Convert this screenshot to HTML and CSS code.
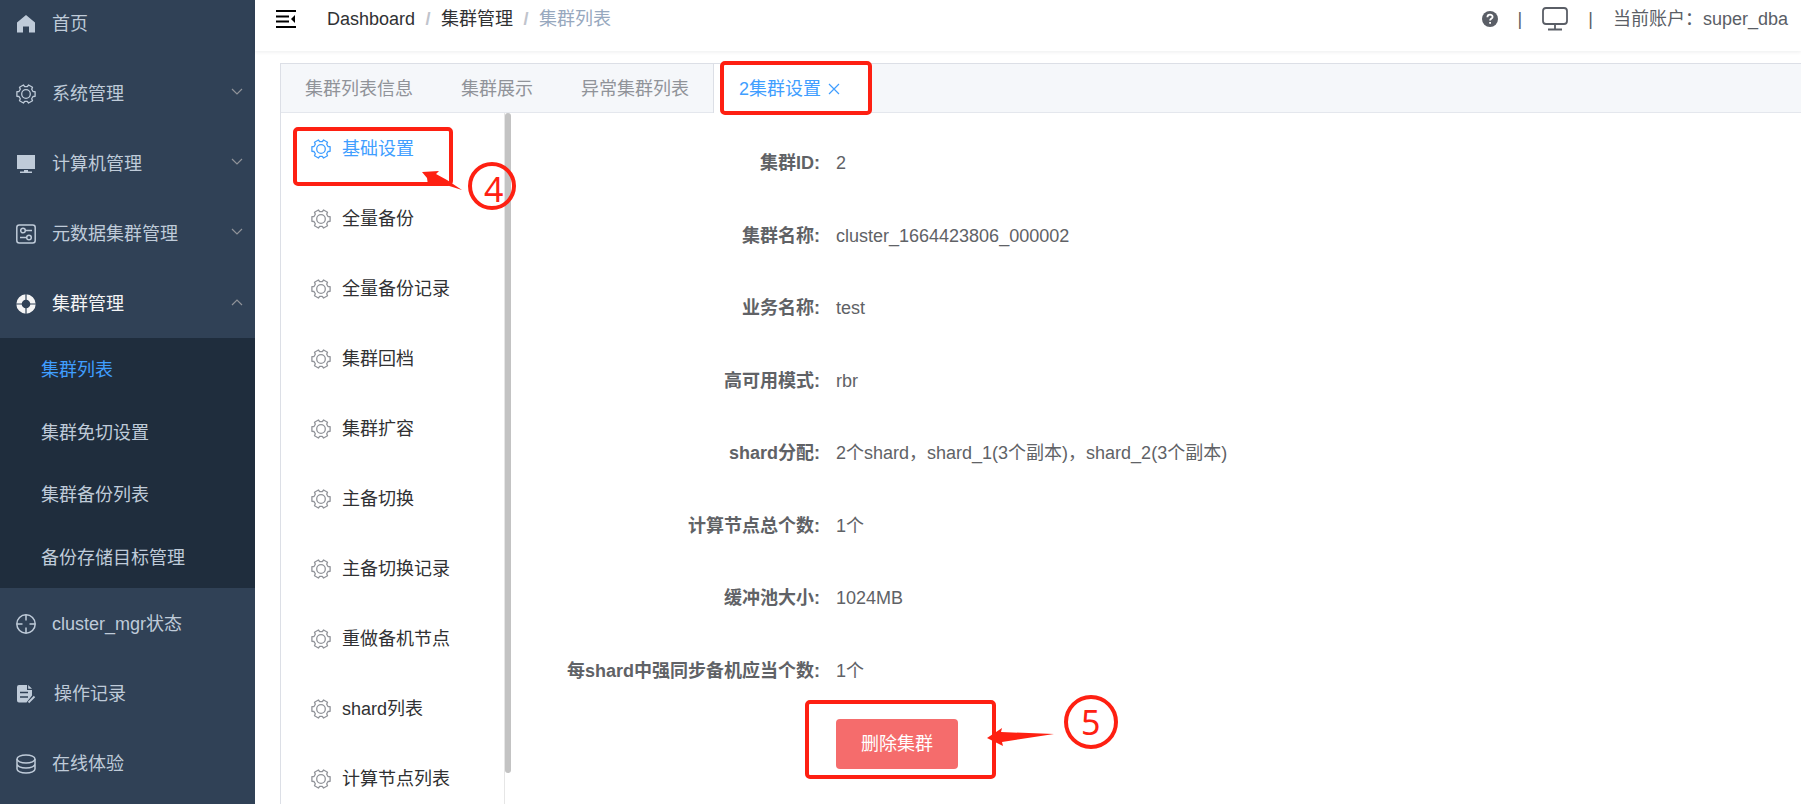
FILE: index.html
```html
<!DOCTYPE html>
<html lang="zh-CN">
<head>
    <meta charset="UTF-8">
    <meta name="viewport" content="width=device-width, initial-scale=1.0">
    <title>集群设置</title>
    <link rel="stylesheet" href="styles.css">
</head>
<body>
    <!-- 公共图标 -->
    <svg class="sprite" aria-hidden="true">
        <symbol id="i-gear" viewBox="0 0 20 20">
            <g fill="none" stroke="currentColor" stroke-linejoin="round">
                <path stroke-width="1.3" d="M19.1 7.7V12.3L17 12.5L15.7 14.8L16.5 16.8L12.6 19L11.3 17.3H8.7L7.4 19L3.5 16.8L4.3 14.8L3 12.5L.9 12.3V7.7L3 7.5L4.3 5.2L3.5 3.2L7.4 1L8.7 2.7H11.3L12.6 1L16.5 3.2L15.7 5.2L17 7.5Z"/>
                <circle stroke-width="1.3" cx="10" cy="10" r="4.3"/>
            </g>
        </symbol>
        <symbol id="i-down" viewBox="0 0 12 8">
            <path fill="none" stroke="currentColor" stroke-width="1.2" d="M1 1l5 5 5-5"/>
        </symbol>
    </svg>

    <div class="app">
        <nav class="sidebar">
            <ul class="menu">
                <li><a href="#" class="menu-item">
                    <svg class="icon" viewBox="0 0 20 20"><path fill="currentColor" d="M10 1L19 8.4V18.5H13V12.5H7V18.5H1V8.4Z"/></svg>
                    <span>首页</span>
                </a></li>
                <li><a href="#" class="menu-item">
                    <svg class="icon"><use href="#i-gear"/></svg>
                    <span>系统管理</span>
                    <svg class="arrow"><use href="#i-down"/></svg>
                </a></li>
                <li><a href="#" class="menu-item">
                    <svg class="icon" viewBox="0 0 20 20"><path fill="currentColor" d="M1 1h18v14H1zM8 16h4v1.5h4V19H4v-1.5h4z"/></svg>
                    <span>计算机管理</span>
                    <svg class="arrow"><use href="#i-down"/></svg>
                </a></li>
                <li><a href="#" class="menu-item">
                    <svg class="icon" viewBox="0 0 20 20">
                        <g fill="none" stroke="currentColor" stroke-width="1.5">
                            <rect x="0.8" y="0.9" width="18.4" height="18" rx="2.5"/>
                            <circle cx="7" cy="6.500" r="2.3"/>
                            <circle cx="13" cy="13.500" r="2.3"/>
                            <path d="M9 6.500h7M4 13.500h7"/>
                        </g>
                    </svg>
                    <span>元数据集群管理</span>
                    <svg class="arrow"><use href="#i-down"/></svg>
                </a></li>
                <li>
                    <a href="#" class="menu-item opened">
                        <svg class="icon" viewBox="0 0 20 20">
                            <circle cx="10" cy="10" r="7" fill="none" stroke="currentColor" stroke-width="5.4"/>
                            <path stroke="#304156" stroke-width="1.2" d="M10 0v6M10 14v6M0 10h6M14 10h6"/>
                        </svg>
                        <span>集群管理</span>
                        <svg class="arrow up"><use href="#i-down"/></svg>
                    </a>
                    <ul class="submenu">
                        <li><a href="#" class="active">集群列表</a></li>
                        <li><a href="#">集群免切设置</a></li>
                        <li><a href="#">集群备份列表</a></li>
                        <li><a href="#">备份存储目标管理</a></li>
                    </ul>
                </li>
                <li><a href="#" class="menu-item">
                    <svg class="icon" viewBox="0 0 20 20">
                        <g fill="none" stroke="currentColor" stroke-width="1.5">
                            <circle cx="10" cy="10" r="9.2"/>
                            <path d="M10 1v5.500M10 13.500V19M1 10h5.500M13.500 10H19"/>
                        </g>
                    </svg>
                    <span>cluster_mgr状态</span>
                </a></li>
                <li><a href="#" class="menu-item wide">
                    <svg class="icon" viewBox="0 0 20 20">
                        <path fill="currentColor" d="M3 1h8v5h5v5.500L10.500 18.500H3q-2 0-2-2V3q0-2 2-2z"/>
                        <path fill="currentColor" d="M12.200 1l3.800 3.800h-3.800z"/>
                        <path stroke="#304156" stroke-width="1.5" d="M4 8.500h8M4 13h8"/>
                        <path stroke="currentColor" stroke-width="1.8" d="M12.500 18.500l6-6"/>
                    </svg>
                    <span>操作记录</span>
                </a></li>
                <li><a href="#" class="menu-item">
                    <svg class="icon" viewBox="0 0 20 20">
                        <g fill="none" stroke="currentColor" stroke-width="1.5">
                            <ellipse cx="10" cy="5" rx="9" ry="4"/>
                            <path d="M1 5v5c0 2.200 4 4 9 4s9-1.800 9-4V5M1 10v5c0 2.200 4 4 9 4s9-1.800 9-4v-5"/>
                        </g>
                    </svg>
                    <span>在线体验</span>
                </a></li>
            </ul>
        </nav>

        <div class="page">
            <header class="topbar">
                <button class="fold" type="button" aria-label="收起菜单">
                    <svg viewBox="0 0 20 20"><path stroke="#000" stroke-width="2" d="M0 2h20M0 7.500h13M0 12.500h13M0 18h20"/><path d="M15 10l4-4v8z"/></svg>
                </button>
                <div class="breadcrumb">
                    <a href="#">Dashboard</a><i>/</i><a href="#">集群管理</a><i>/</i><span>集群列表</span>
                </div>
                <div class="user-area">
                    <svg class="help" viewBox="0 0 16 16">
                        <circle cx="8" cy="8" r="8" fill="#5a5e66"/>
                        <path fill="none" stroke="#fff" stroke-width="1.8" d="M5.400 6.200c0-3.400 5.200-3.200 5.200-.3 0 1.700-2.500 1.700-2.500 3.700M8.100 10.900v1.900"/>
                    </svg>
                    <span>|</span>
                    <svg class="screen" viewBox="0 0 26 24">
                        <path fill="none" stroke="#5a5e66" stroke-width="1.8" d="M4 1h18q3 0 3 3v10q0 3-3 3H4q-3 0-3-3V4q0-3 3-3zM13 17v5M6 22.500h14"/>
                    </svg>
                    <span>|</span>
                    <span>当前账户：super_dba</span>
                </div>
            </header>

            <main class="card">
                <div class="tabs">
                    <button type="button">集群列表信息</button>
                    <button type="button">集群展示</button>
                    <button type="button">异常集群列表</button>
                    <button type="button" class="current">2集群设置
                        <svg class="close" viewBox="0 0 12 12"><path stroke="currentColor" stroke-width="1.2" d="M1 1l10 10M11 1L1 11"/></svg>
                    </button>
                </div>
                <div class="card-body">
                    <aside class="settings">
                        <a href="#" class="active"><svg class="icon"><use href="#i-gear"/></svg>基础设置</a>
                        <a href="#"><svg class="icon"><use href="#i-gear"/></svg>全量备份</a>
                        <a href="#"><svg class="icon"><use href="#i-gear"/></svg>全量备份记录</a>
                        <a href="#"><svg class="icon"><use href="#i-gear"/></svg>集群回档</a>
                        <a href="#"><svg class="icon"><use href="#i-gear"/></svg>集群扩容</a>
                        <a href="#"><svg class="icon"><use href="#i-gear"/></svg>主备切换</a>
                        <a href="#"><svg class="icon"><use href="#i-gear"/></svg>主备切换记录</a>
                        <a href="#"><svg class="icon"><use href="#i-gear"/></svg>重做备机节点</a>
                        <a href="#"><svg class="icon"><use href="#i-gear"/></svg>shard列表</a>
                        <a href="#"><svg class="icon"><use href="#i-gear"/></svg>计算节点列表</a>
                    </aside>
                    <div class="scrollbar"></div>
                    <section class="detail">
                        <dl>
                            <dt>集群ID:</dt><dd>2</dd>
                            <dt>集群名称:</dt><dd>cluster_1664423806_000002</dd>
                            <dt>业务名称:</dt><dd>test</dd>
                            <dt>高可用模式:</dt><dd>rbr</dd>
                            <dt>shard分配:</dt><dd>2个shard，shard_1(3个副本)，shard_2(3个副本)</dd>
                            <dt>计算节点总个数:</dt><dd>1个</dd>
                            <dt>缓冲池大小:</dt><dd>1024MB</dd>
                            <dt>每shard中强同步备机应当个数:</dt><dd>1个</dd>
                        </dl>
                        <button type="button" class="btn-danger">删除集群</button>
                    </section>
                </div>
            </main>
        </div>
    </div>

    <!-- 步骤标注 -->
    <svg class="marks" viewBox="0 0 1130 804">
        <g fill="none" stroke="#fe2012" stroke-width="4">
            <rect x="722" y="63" width="148" height="50" rx="3"/>
            <rect x="295" y="129" width="156" height="55" rx="3"/>
            <rect x="807" y="702" width="187" height="75" rx="3"/>
            <circle cx="492" cy="186" r="22"/>
            <circle cx="1091" cy="722" r="25"/>
        </g>
        <g fill="#fe2012">
            <path d="M422 172L439 171L436 174L447 180L462 190L443 184L428 185L427 178Z"/>
            <path d="M987 738L1002 728L1001 732L1054 734L1002 742L1003 746Z"/>
            <text x="484" y="202">4</text>
            <text x="1081" y="735">5</text>
        </g>
    </svg>
</body>
</html>
```
FILE: styles.css
```css
* {
    box-sizing: border-box;
}
body {
    margin: 0;
    overflow: hidden;
    font-family: "Liberation Sans", "Noto Sans CJK SC", sans-serif;
    font-size: 18px;
    line-height: 24px;
    color: #606266;
    background: #fff;
}
ul, dl, dd {
    margin: 0;
    padding: 0;
    list-style: none;
}
a {
    color: inherit;
    text-decoration: none;
}
button {
    font: inherit;
    border: 0;
    cursor: pointer;
}
.sprite {
    display: none;
}
.app {
    display: flex;
    height: 100vh;
}

/* 左侧菜单 */
.sidebar {
    flex: 0 0 255px;
    overflow: hidden;
    background: #304156;
    color: #bfcbd9;
}
.menu {
    margin-top: -12px;
}
.menu-item {
    display: flex;
    align-items: center;
    gap: 16px;
    height: 70px;
    padding: 2px 12px 0 16px;
}
.menu-item.wide {
    gap: 18px;
}
.menu-item.opened {
    color: #f4f4f5;
}
.icon {
    flex: none;
    width: 20px;
    height: 20px;
}
.arrow {
    width: 12px;
    height: 8px;
    margin-left: auto;
    margin-bottom: 4px;
    color: #909399;
}
.arrow.up {
    transform: rotate(180deg);
}
.submenu {
    display: grid;
    grid-auto-rows: 1fr;
    height: 250px;
    background: #1f2d3d;
}
.submenu a {
    display: flex;
    align-items: center;
    height: 100%;
    padding: 2px 0 0 41px;
}
.submenu .active {
    color: #409eff;
}

/* 顶部 */
.page {
    flex: 1;
    min-width: 0;
    display: flex;
    flex-direction: column;
}
.topbar {
    display: flex;
    align-items: center;
    height: 51px;
    padding: 0 13px 14px 21px;
    box-shadow: 0 1px 4px rgba(0, 21, 41, 0.08);
}
.fold {
    width: 20px;
    height: 20px;
    padding: 0;
    background: none;
}
.fold svg {
    display: block;
}
.breadcrumb {
    display: flex;
    margin-left: 31px;
    color: #97a8be;
}
.breadcrumb a {
    color: #303133;
}
.breadcrumb i {
    width: 26px;
    text-align: center;
    font-style: normal;
    font-weight: bold;
    color: #c0c4cc;
}
.user-area {
    display: flex;
    align-items: center;
    gap: 20px;
    margin-left: auto;
    color: #5a5e66;
}
.help {
    width: 16px;
    height: 16px;
}
.screen {
    width: 26px;
    height: 24px;
}

/* 标签页 */
.card {
    flex: 1;
    min-height: 0;
    display: flex;
    flex-direction: column;
    margin: 12px 0 0 25px;
    border: 1px solid #dcdfe6;
    border-width: 1px 0 0 1px;
}
.tabs {
    display: flex;
    height: 49px;
    background: #f5f7fa;
    border-bottom: 1px solid #e4e7ed;
}
.tabs button {
    padding: 2px 24px 0;
    background: none;
    color: #909399;
}
.tabs .current {
    height: 49px;
    padding: 0 28px 0 25px;
    border-left: 1px solid #dcdfe6;
    background: #fff;
    color: #409eff;
}
.close {
    width: 12px;
    height: 12px;
    margin-left: 2px;
}
.card-body {
    flex: 1;
    min-height: 0;
    display: flex;
}

/* 设置菜单 */
.settings {
    flex: 0 0 224px;
    overflow: hidden;
    border-right: 1px solid #e6e6e6;
    color: #303133;
}
.settings a {
    display: flex;
    align-items: center;
    gap: 11px;
    height: 70px;
    padding: 2px 0 0 30px;
}
.settings .icon {
    color: #909399;
}
.settings .active,
.settings .active .icon {
    color: #409eff;
}
.scrollbar {
    width: 6px;
    height: 660px;
    border-radius: 3px;
    background: #c3c3c3;
}

/* 集群信息 */
.detail {
    flex: 1;
    padding-top: 14px;
}
.detail dl {
    display: grid;
    grid-template-columns: 309px 1fr;
    grid-auto-rows: 1fr;
    column-gap: 16px;
    align-items: center;
    height: 580px;
}
.detail dt {
    text-align: right;
    font-weight: bold;
}
.btn-danger {
    height: 50px;
    margin: 12px 0 0 325px;
    padding: 0 25px;
    border-radius: 4px;
    background: #f56c6c;
    color: #fff;
}

.marks {
    position: absolute;
    top: 0;
    left: 0;
    width: 1130px;
    height: 804px;
    pointer-events: none;
    font-family: "Noto Sans", sans-serif;
    font-size: 34px;
}
```
